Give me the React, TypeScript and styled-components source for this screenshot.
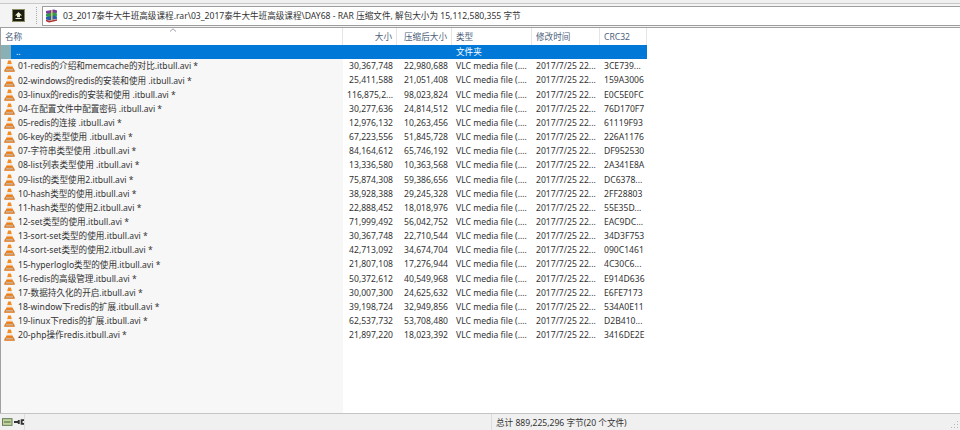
import styled, { createGlobalStyle } from "styled-components";

const GlobalStyle = createGlobalStyle`
  html, body {
    margin: 0;
    padding: 0;
    background: #fff;
  }
  body {
    font-family: "Noto Sans", "Noto Sans CJK SC", sans-serif;
    font-size: 8.6px;
    color: #333;
    overflow: hidden;
  }
`;

const COLUMNS = "343px 54px 55px 80px 68px 47px";

const files = [
  ["01-redis的介绍和memcache的对比.itbull.avi *", "30,367,748", "22,980,688", "3CE739..."],
  ["02-windows的redis的安装和使用 .itbull.avi *", "25,411,588", "21,051,408", "159A3006"],
  ["03-linux的redis的安装和使用 .itbull.avi *", "116,875,2...", "98,023,824", "E0C5E0FC"],
  ["04-在配置文件中配置密码 .itbull.avi *", "30,277,636", "24,814,512", "76D170F7"],
  ["05-redis的连接 .itbull.avi *", "12,976,132", "10,263,456", "61119F93"],
  ["06-key的类型使用 .itbull.avi *", "67,223,556", "51,845,728", "226A1176"],
  ["07-字符串类型使用 .itbull.avi *", "84,164,612", "65,746,192", "DF952530"],
  ["08-list列表类型使用 .itbull.avi *", "13,336,580", "10,363,568", "2A341E8A"],
  ["09-list的类型使用2.itbull.avi *", "75,874,308", "59,386,656", "DC6378..."],
  ["10-hash类型的使用.itbull.avi *", "38,928,388", "29,245,328", "2FF28803"],
  ["11-hash类型的使用2.itbull.avi *", "22,888,452", "18,018,976", "55E35D..."],
  ["12-set类型的使用.itbull.avi *", "71,999,492", "56,042,752", "EAC9DC..."],
  ["13-sort-set类型的使用.itbull.avi *", "30,367,748", "22,710,544", "34D3F753"],
  ["14-sort-set类型的使用2.itbull.avi *", "42,713,092", "34,674,704", "090C1461"],
  ["15-hyperloglo类型的使用.itbull.avi *", "21,807,108", "17,276,944", "4C30C6..."],
  ["16-redis的高级管理.itbull.avi *", "50,372,612", "40,549,968", "E914D636"],
  ["17-数据持久化的开启.itbull.avi *", "30,007,300", "24,625,632", "E6FE7173"],
  ["18-window下redis的扩展.itbull.avi *", "39,198,724", "32,949,856", "534A0E11"],
  ["19-linux下redis的扩展.itbull.avi *", "62,537,732", "53,708,480", "D2B410..."],
  ["20-php操作redis.itbull.avi *", "21,897,220", "18,023,392", "3416DE2E"],
];

const Window = styled.div`
  width: 960px;
  height: 430px;
  display: flex;
  flex-direction: column;
  background: #f0f0f0;
`;

const Toolbar = styled.div`
  height: 23px;
  margin-top: 3px;
  border-top: 1px solid #c8c8c8;
  display: flex;
  align-items: center;
  gap: 10px;
  padding-left: 12px;
  background: #f4f4f4;
`;

const UpButton = styled.div`
  width: 11px;
  height: 11px;
  display: flex;
  align-items: center;
  justify-content: center;
  background: #1d1d12;
  border: 1px solid #8a8a60;
`;

const Separator = styled.div`
  width: 3px;
  height: 17px;
  border-left: 1px dotted #aaa;
  margin-left: 1px;
`;

const AddressBar = styled.div`
  flex: 1;
  height: 18px;
  margin-left: -8px;
  margin-right: 0;
  display: flex;
  align-items: center;
  gap: 4px;
  padding-left: 2px;
  background: #fff;
  border: 1px solid #9d9d9d;
  border-right: none;
  white-space: nowrap;
`;

const ListPane = styled.div`
  flex: 1;
  position: relative;
  display: flex;
  flex-direction: column;
  border-left: 1px solid #a0a0a0;
  border-top: 1px solid #a0a0a0;
  background: linear-gradient(to right, #f7f7f7 342px, #fff 342px);
  min-height: 0;
`;

const HeaderRow = styled.div`
  height: 17px;
  display: grid;
  grid-template-columns: 342px 54px 55px 80px 68px 47px;
  background: #fff;
`;

const HeaderCell = styled.div<{ $right?: boolean }>`
  display: flex;
  align-items: center;
  justify-content: ${(p) => (p.$right ? "flex-end" : "flex-start")};
  padding: 0 4px;
  border-right: 1px solid #e5e5e5;
  color: #4c607a;
  white-space: nowrap;
`;

const SortMark = styled.svg`
  position: absolute;
  left: 168px;
  top: 0;
`;

const Row = styled.div<{ $selected?: boolean }>`
  height: 14.16px;
  display: grid;
  grid-template-columns: 342px 54px 55px 80px 68px 47px;
  width: 646px;
  line-height: 14px;
  white-space: nowrap;
`;

const ParentRow = styled(Row)`
  height: 14px;
  margin-bottom: 0.3px;
  color: #fff;
`;

const NameCell = styled.div`
  display: flex;
  align-items: center;
  gap: 3px;
  padding-left: 3px;
  min-width: 0;
`;

const ParentName = styled.div`
  display: flex;
  align-items: center;
  padding-left: 3px;
  background: linear-gradient(to right, #89b0b4 10px, #0078d7 10px);
`;

const ParentLabel = styled.span`
  margin-left: 12px;
`;

const Cell = styled.div<{ $right?: boolean; $selected?: boolean }>`
  padding: 0 4px;
  text-align: ${(p) => (p.$right ? "right" : "left")};
  background: ${(p) => (p.$selected ? "#0078d7" : "transparent")};
  overflow: hidden;
`;

const StatusBar = styled.div`
  height: 16px;
  display: flex;
  align-items: center;
  position: relative;
  background: #f0f0f0;
  border-top: 1px solid #c4c4c4;
`;

const StatusIcons = styled.div`
  width: 25px;
  height: 100%;
  display: flex;
  align-items: center;
  gap: 1px;
  padding-left: 2px;
  box-sizing: border-box;
  border-right: 1px solid #dcdcdc;
`;

const StatusMiddle = styled.div`
  width: 466px;
  height: 100%;
  border-right: 1px solid #dcdcdc;
`;

const StatusText = styled.div`
  padding-left: 4px;
  white-space: nowrap;
`;

const Grip = styled.svg`
  position: absolute;
  right: 1px;
  bottom: 1px;
`;

const Cone = () => (
  <svg width="11" height="12" viewBox="0 0 11 12">
    <path d="M4.2 0.6h2.6l1 3.4H3.2z" fill="#f58a1f" />
    <path d="M3.1 4.2h4.8l0.6 2.2H2.5z" fill="#efe7dc" />
    <path d="M2.4 6.6h6.2l0.7 2.2H1.7z" fill="#f07d12" />
    <path d="M1.2 8.6h8.6l1 2.4a0.6 0.6 0 0 1-0.5 0.8H0.7a0.6 0.6 0 0 1-0.5-0.8z" fill="#e0700e" />
    <path d="M2 9.2h7l0.6 1.4H1.4z" fill="#c9c4bd" />
  </svg>
);

const RarIcon = () => (
  <svg width="14" height="14" viewBox="0 0 14 14">
    <path d="M1 2l8-1.6 3 1.2v2.2l-8 1.6-3-1.2z" fill="#7a3f9d" />
    <path d="M1 5l8-1.6 3 1.2v2.2L4 8.4 1 7.2z" fill="#2f9e4a" />
    <path d="M1 8l8-1.6 3 1.2v2.2l-8 1.6L1 10.2z" fill="#2a5fb0" />
    <path d="M1 10.6l3 1.2 8-1.6v1.6l-8 1.6-3-1.2z" fill="#b03030" />
    <path d="M6 1h1.6v10.4H6z" fill="#d8c070" />
  </svg>
);

export default function App() {
  return (
    <>
      <GlobalStyle />
      <Window>
        <Toolbar>
          <UpButton>
            <svg width="9" height="9" viewBox="0 0 9 9">
              <path d="M4.5 1L8 4.6H6v1.6H3V4.6H1z" fill="#f2f2d8" />
              <path d="M1.5 7h6v1h-6z" fill="#f2f2d8" />
            </svg>
          </UpButton>
          <Separator />
          <AddressBar>
            <RarIcon />
            <span>03_2017泰牛大牛班高级课程.rar\03_2017泰牛大牛班高级课程\DAY68 - RAR 压缩文件, 解包大小为 15,112,580,355 字节</span>
          </AddressBar>
        </Toolbar>
        <ListPane>
          <HeaderRow>
            <HeaderCell>名称</HeaderCell>
            <HeaderCell $right>大小</HeaderCell>
            <HeaderCell $right>压缩后大小</HeaderCell>
            <HeaderCell>类型</HeaderCell>
            <HeaderCell>修改时间</HeaderCell>
            <HeaderCell>CRC32</HeaderCell>
          </HeaderRow>
          <SortMark width="8" height="4" viewBox="0 0 8 4">
            <path d="M1 3.5L4 0.8l3 2.7" fill="none" stroke="#9aa0a6" />
          </SortMark>
          <ParentRow>
            <ParentName>
              <ParentLabel>..</ParentLabel>
            </ParentName>
            <Cell $selected />
            <Cell $selected />
            <Cell $selected>文件夹</Cell>
            <Cell $selected />
            <Cell $selected />
          </ParentRow>
          {files.map(([name, size, packed, crc]) => (
            <Row key={name}>
              <NameCell>
                <Cone />
                <span>{name}</span>
              </NameCell>
              <Cell $right>{size}</Cell>
              <Cell $right>{packed}</Cell>
              <Cell>VLC media file (....</Cell>
              <Cell>2017/7/25 22...</Cell>
              <Cell>{crc}</Cell>
            </Row>
          ))}
        </ListPane>
        <StatusBar>
          <StatusIcons>
            <svg width="11" height="8" viewBox="0 0 11 8">
              <rect x="0.5" y="0.5" width="10" height="7" fill="#c4d49a" stroke="#5f7a58" />
              <rect x="2" y="3" width="7" height="2" fill="#7f9a6a" />
            </svg>
            <svg width="11" height="8" viewBox="0 0 11 8">
              <path d="M0 3h4v2H0zM4 2h2v4H4z" fill="#333" />
              <path d="M7 1h4v2H9v2h2v2H7z" fill="#333" />
            </svg>
          </StatusIcons>
          <StatusMiddle />
          <StatusText>总计 889,225,296 字节(20 个文件)</StatusText>
          <Grip width="9" height="9" viewBox="0 0 9 9">
            <path d="M7 1h1v1H7zM4 4h1v1H4zM7 4h1v1H7zM1 7h1v1H1zM4 7h1v1H4zM7 7h1v1H7z" fill="#b8b8b8" />
          </Grip>
        </StatusBar>
      </Window>
    </>
  );
}

export { COLUMNS };
